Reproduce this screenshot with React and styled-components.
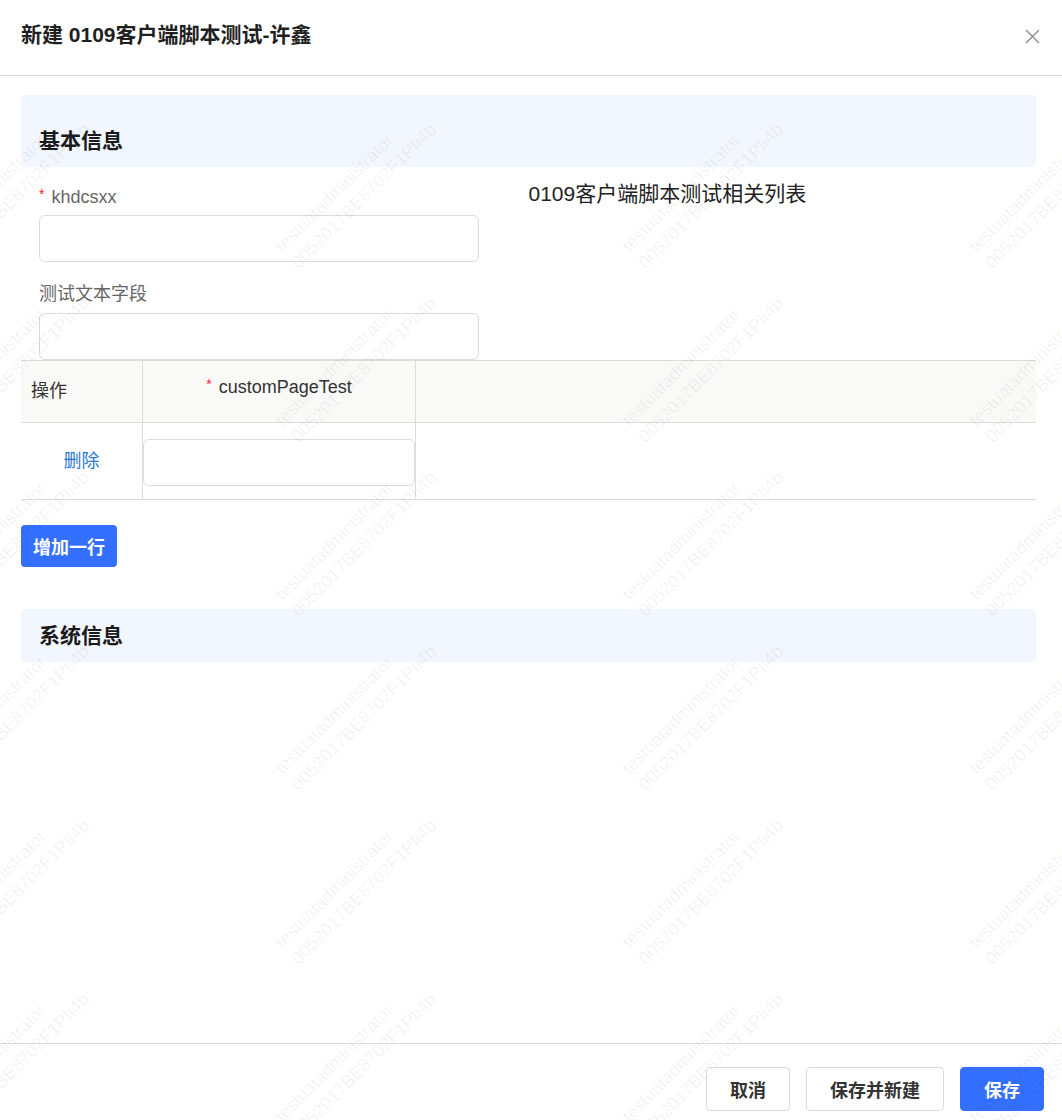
import React from 'react';
import styled, { createGlobalStyle } from 'styled-components';

const GlobalStyle = createGlobalStyle`
  * { box-sizing: border-box; }
  html, body { margin: 0; padding: 0; background: #fff; }
  body {
    font-family: "Liberation Sans", "Noto Sans CJK SC", sans-serif;
    color: #333;
  }
`;

const Modal = styled.div`
  position: relative;
  height: 1120px;
  display: flex;
  flex-direction: column;
  overflow: hidden;
  background: #fff;
`;

const Header = styled.div`
  height: 76px;
  flex-shrink: 0;
  display: flex;
  align-items: center;
  justify-content: space-between;
  padding: 0 22px 6px 21px;
  border-bottom: 1px solid #dcdcdc;
`;

const Title = styled.h1`
  margin: 0;
  font-size: 21px;
  line-height: 24px;
  font-weight: 700;
  color: #1f1f1f;
`;

const CloseButton = styled.button`
  width: 16px;
  height: 16px;
  margin-top: 3px;
  padding: 0;
  border: 0;
  background: none;
  display: flex;
  align-items: center;
  justify-content: center;
  cursor: pointer;
`;

const Body = styled.div`
  flex: 1;
  padding: 19px 26px 0 21px;
`;

const SectionBar = styled.div`
  display: flex;
  align-items: ${p => (p.$tall ? 'flex-end' : 'center')};
  height: ${p => (p.$tall ? 72 : 53)}px;
  padding: ${p => (p.$tall ? '0 18px 14px' : '0 18px')};
  margin-top: ${p => p.$gap || 0}px;
  background: #f2f6fe;
  border-radius: 4px;
  font-size: 21px;
  line-height: 24px;
  font-weight: 700;
  color: #1a1a1a;
`;

const FormGrid = styled.div`
  display: grid;
  grid-template-columns: 1fr 1fr;
  padding-top: 18px;
`;

const FieldColumn = styled.div`
  display: flex;
  flex-direction: column;
  padding: 0 50px 0 18px;
`;

const Label = styled.label`
  display: flex;
  align-items: flex-start;
  margin-top: ${p => p.$gap || 0}px;
  margin-bottom: ${p => (p.$gap ? 7 : 6)}px;
  font-size: 18px;
  line-height: 24px;
  color: #666;
`;

const Required = styled.span`
  color: #f5222d;
  font-size: 14px;
  line-height: 18px;
  margin-right: 7px;
`;

const TextInput = styled.input`
  display: block;
  width: 100%;
  height: 47px;
  padding: 0 12px;
  border: 1px solid #dcdcdc;
  border-radius: 6px;
  background: #fff;
  font: inherit;
  font-size: 16px;
  outline: none;
`;

const RelatedTitle = styled.div`
  font-size: 21px;
  line-height: 18px;
  color: #222;
`;

const Table = styled.div`
  border-top: 1px solid #dcdcdc;
`;

const Row = styled.div`
  display: grid;
  grid-template-columns: 122px 273px 1fr;
  height: ${p => (p.$head ? 62 : 77)}px;
  background: ${p => (p.$head ? '#f9f9f8' : 'transparent')};
  border-bottom: 1px solid #dcdcdc;
`;

const Cell = styled.div`
  display: flex;
  align-items: ${p => (p.$top ? 'flex-start' : 'center')};
  justify-content: ${p => (p.$center ? 'center' : 'flex-start')};
  padding-top: ${p => p.$top || 0}px;
  padding-left: ${p => (p.$pad ? 10 : 0)}px;
  border-right: ${p => (p.$last ? 'none' : '1px solid #dcdcdc')};
  font-size: 18px;
  line-height: 24px;
  color: #333;
`;

const CellInput = styled(TextInput)`
  margin-top: 3px;
`;

const LinkButton = styled.a`
  color: #2a78d3;
  font-size: 18px;
  cursor: pointer;
`;

const AddRowButton = styled.button`
  margin-top: 25px;
  height: 42px;
  padding: 0 12px;
  border: 0;
  border-radius: 4px;
  background: #3370ff;
  color: #fff;
  font: inherit;
  font-size: 18px;
  font-weight: 600;
  cursor: pointer;
`;

const Footer = styled.div`
  height: 77px;
  flex-shrink: 0;
  display: flex;
  justify-content: flex-end;
  align-items: flex-start;
  gap: 16px;
  padding: 23px 18px 0 0;
  border-top: 1px solid #dcdcdc;
`;

const FooterButton = styled.button`
  height: 44px;
  padding: 0 23px;
  border: 1px solid ${p => (p.$primary ? '#3370ff' : '#dcdcdc')};
  border-radius: 4px;
  background: ${p => (p.$primary ? '#3370ff' : '#fff')};
  color: ${p => (p.$primary ? '#fff' : '#333')};
  font: inherit;
  font-size: 18px;
  font-weight: 600;
  cursor: pointer;
`;

const WatermarkLayer = styled.div`
  position: absolute;
  top: 100px;
  left: 0;
  right: 0;
  bottom: 0;
  overflow: hidden;
  pointer-events: none;
  z-index: 5;
`;

const WatermarkGrid = styled.div`
  position: absolute;
  left: -164px;
  top: -173px;
  display: grid;
  grid-template-columns: repeat(5, 347px);
  grid-auto-rows: 174px;
`;

const WatermarkTile = styled.div`
  display: flex;
  align-items: center;
  justify-content: center;
`;

const WatermarkText = styled.div`
  transform: rotate(-45deg);
  font-size: 18px;
  line-height: 23px;
  color: rgba(0, 0, 0, 0.06);
  white-space: nowrap;
`;

const tiles = Array.from({ length: 40 });

function CloseIcon() {
  return (
    <svg width="15" height="15" viewBox="0 0 15 15">
      <path d="M1 1 L14 14 M14 1 L1 14" stroke="#8c8c8c" strokeWidth="1.4" fill="none" />
    </svg>
  );
}

export default function App() {
  return (
    <>
      <GlobalStyle />
      <Modal>
        <Header>
          <Title>新建 0109客户端脚本测试-许鑫</Title>
          <CloseButton aria-label="关闭">
            <CloseIcon />
          </CloseButton>
        </Header>

        <Body>
          <SectionBar $tall>基本信息</SectionBar>
          <FormGrid>
            <FieldColumn>
              <Label>
                <Required>*</Required>khdcsxx
              </Label>
              <TextInput />
              <Label $gap={20}>测试文本字段</Label>
              <TextInput />
            </FieldColumn>
            <RelatedTitle>0109客户端脚本测试相关列表</RelatedTitle>
          </FormGrid>

          <Table>
            <Row $head>
              <Cell $pad $top={18}>操作</Cell>
              <Cell $center $top={14}>
                <Required>*</Required>customPageTest
              </Cell>
              <Cell $last />
            </Row>
            <Row>
              <Cell $center>
                <LinkButton>删除</LinkButton>
              </Cell>
              <Cell>
                <CellInput />
              </Cell>
              <Cell $last />
            </Row>
          </Table>

          <AddRowButton>增加一行</AddRowButton>

          <SectionBar $gap={42}>系统信息</SectionBar>
        </Body>

        <Footer>
          <FooterButton>取消</FooterButton>
          <FooterButton>保存并新建</FooterButton>
          <FooterButton $primary>保存</FooterButton>
        </Footer>

        <WatermarkLayer>
          <WatermarkGrid>
            {tiles.map((_, i) => (
              <WatermarkTile key={i}>
                <WatermarkText>
                  testuatadministrator
                  <br />
                  0052017BE8702F1PIi4b
                </WatermarkText>
              </WatermarkTile>
            ))}
          </WatermarkGrid>
        </WatermarkLayer>
      </Modal>
    </>
  );
}
